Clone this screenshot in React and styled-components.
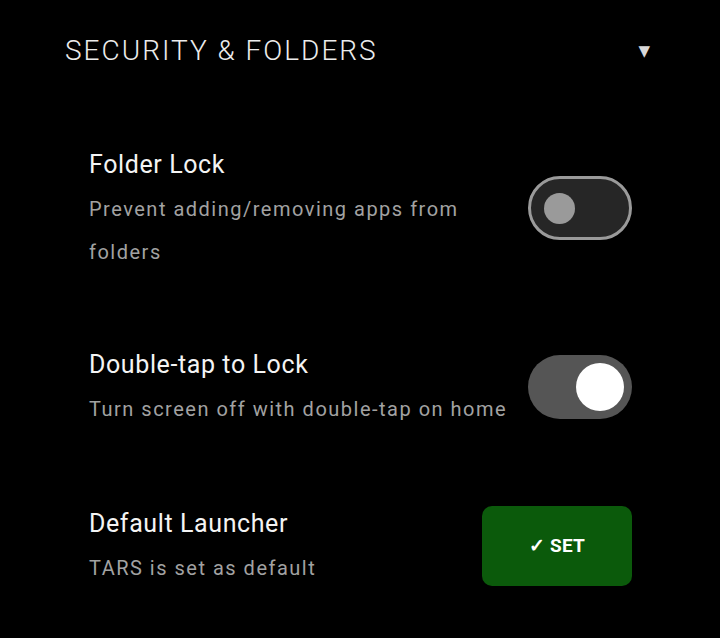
import React, { useState } from 'react';
import styled, { createGlobalStyle } from 'styled-components';

const GlobalStyle = createGlobalStyle`
    html, body {
        margin: 0;
        padding: 0;
        background: #000000;
    }
    body {
        font-family: Roboto, "Noto Sans", sans-serif;
        -webkit-font-smoothing: antialiased;
    }
`;

const Page = styled.div`
    width: 720px;
    height: 638px;
    background: #000000;
    box-sizing: border-box;
    padding: 34px 88px 0 65px;
    overflow: hidden;
`;

const Header = styled.div`
    display: flex;
    align-items: center;
    justify-content: space-between;
`;

const HeaderTitle = styled.h2`
    margin: 0;
    font-family: Roboto, sans-serif;
    font-weight: 300;
    font-size: 28px;
    line-height: 33px;
    letter-spacing: 2px;
    color: #ececec;
`;

const Caret = styled.span`
    font-family: "DejaVu Sans", sans-serif;
    font-size: 15px;
    color: #d8d8d8;
    margin-right: -18px;
`;

const List = styled.div`
    display: flex;
    flex-direction: column;
    gap: 68px;
    padding: 75px 0 0 24px;
`;

const Row = styled.div`
    display: flex;
    align-items: center;
    justify-content: space-between;
    gap: 16px;
    margin-top: ${({ $extra }) => ($extra ? `${$extra}px` : '0')};
`;

const TextBlock = styled.div`
    display: flex;
    flex-direction: column;
    max-width: 425px;
    padding-top: 8px;
`;

const Title = styled.div`
    font-size: 25px;
    line-height: 30px;
    letter-spacing: 0.6px;
    color: #f4f4f4;
    margin-bottom: 8px;
`;

const Subtitle = styled.div`
    font-size: 20px;
    line-height: 43px;
    letter-spacing: 1.5px;
    color: #a2a2a2;
`;

const Track = styled.button`
    flex-shrink: 0;
    width: 104px;
    height: 64px;
    border-radius: 32px;
    box-sizing: border-box;
    cursor: pointer;
    display: flex;
    align-items: center;
    border: ${({ on }) => (on ? 'none' : '3px solid #9a9a9a')};
    background: ${({ on }) => (on ? '#555555' : '#262626')};
    justify-content: ${({ on }) => (on ? 'flex-end' : 'flex-start')};
    padding: ${({ on }) => (on ? '0 8px' : '0 13px')};
`;

const Knob = styled.span`
    display: block;
    border-radius: 50%;
    width: ${({ on }) => (on ? '48px' : '31px')};
    height: ${({ on }) => (on ? '48px' : '31px')};
    background: ${({ on }) => (on ? '#ffffff' : '#9a9a9a')};
`;

const SetButton = styled.button`
    flex-shrink: 0;
    width: 150px;
    height: 80px;
    border: none;
    border-radius: 10px;
    background: #0b5a0b;
    color: #ffffff;
    font-family: Roboto, sans-serif;
    font-weight: 700;
    font-size: 19px;
    letter-spacing: 0.2px;
    cursor: pointer;
`;

const Toggle = ({ on, onToggle }) => (
    <Track on={on} onClick={onToggle}>
        <Knob on={on} />
    </Track>
);

export default function App() {
    const [folderLock, setFolderLock] = useState(false);
    const [doubleTap, setDoubleTap] = useState(true);

    return (
        <>
            <GlobalStyle />
            <Page>
                <Header>
                    <HeaderTitle>SECURITY &amp; FOLDERS</HeaderTitle>
                    <Caret>▼</Caret>
                </Header>
                <List>
                    <Row>
                        <TextBlock>
                            <Title>Folder Lock</Title>
                            <Subtitle>Prevent adding/removing apps from folders</Subtitle>
                        </TextBlock>
                        <Toggle on={folderLock} onToggle={() => setFolderLock(v => !v)} />
                    </Row>
                    <Row>
                        <TextBlock>
                            <Title>Double-tap to Lock</Title>
                            <Subtitle>Turn screen off with double-tap on home</Subtitle>
                        </TextBlock>
                        <Toggle on={doubleTap} onToggle={() => setDoubleTap(v => !v)} />
                    </Row>
                    <Row $extra={2}>
                        <TextBlock>
                            <Title>Default Launcher</Title>
                            <Subtitle>TARS is set as default</Subtitle>
                        </TextBlock>
                        <SetButton>✓ SET</SetButton>
                    </Row>
                </List>
            </Page>
        </>
    );
}
